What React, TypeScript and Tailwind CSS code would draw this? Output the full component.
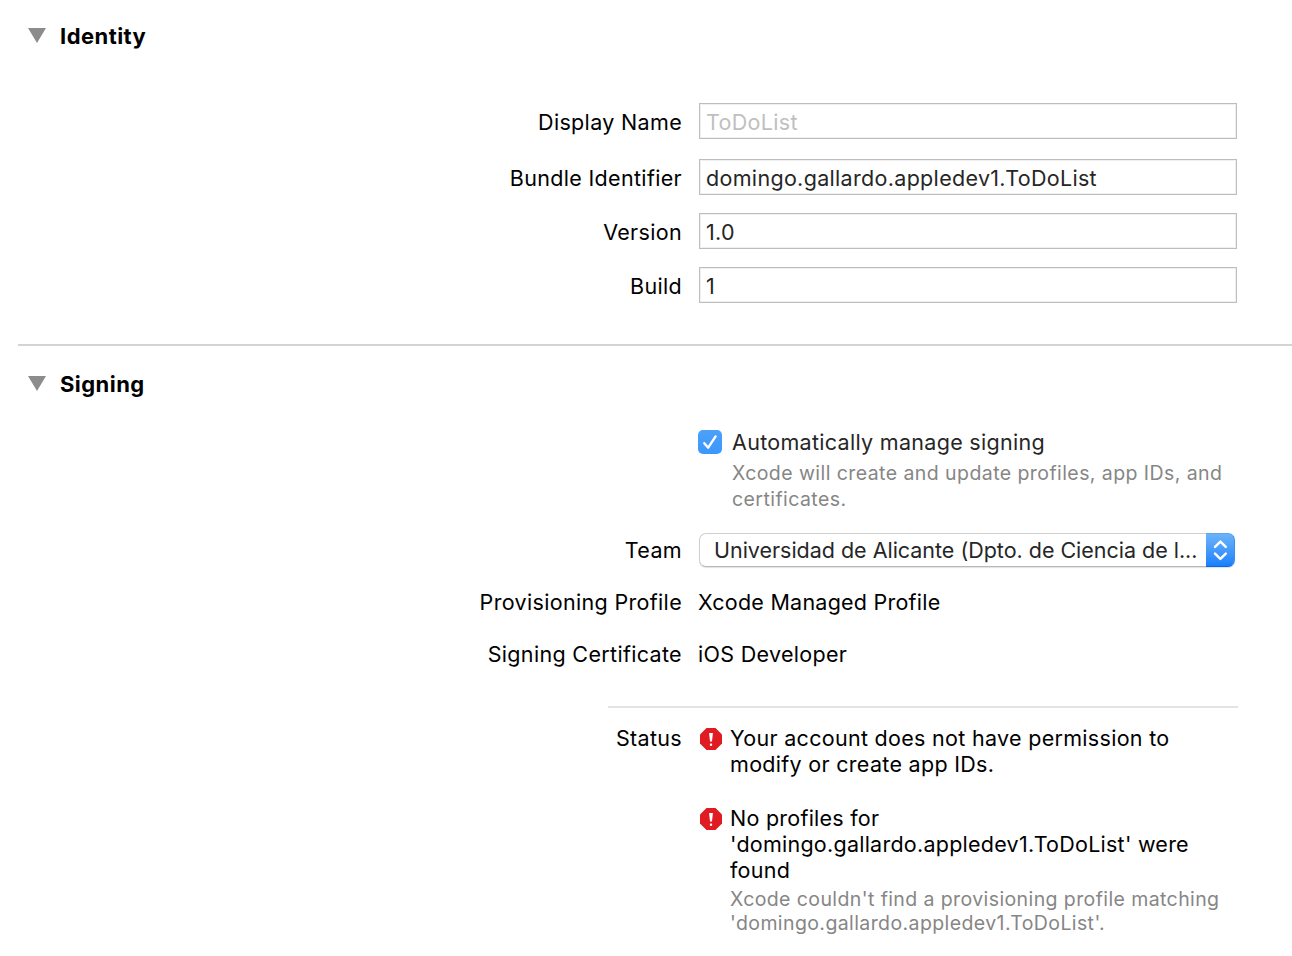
import type { ReactNode } from "react";

function SectionHeader({ title }: { title: string }) {
  return (
    <header className="flex h-8 items-start pl-7">
      <svg className="mt-2 h-[15px] w-[18px]" viewBox="0 0 18 15" aria-hidden="true">
        <path d="M0 0h18L9 15z" fill="#8c8c8c" />
      </svg>
      <h2 className="ml-3.5 mt-[3px] text-[22px] leading-[26px] font-bold tracking-[0.45px] text-black">
        {title}
      </h2>
    </header>
  );
}

function Row({ label, children }: { label: string; children: ReactNode }) {
  return (
    <div className="flex">
      <div className="mt-1.5 w-[682px] shrink-0 text-right tracking-[0.33px] text-black">{label}</div>
      {children}
    </div>
  );
}

function Field({ value = "", placeholder }: { value?: string; placeholder?: string }) {
  return (
    <input
      className="ml-[17px] h-9 w-[538px] border border-[#bdbdbd] bg-white pt-[3px] pb-px pl-[6px] tracking-[0.32px] text-[#262626] shadow-[inset_0_0_0_1px_#f0f0f0] outline-none placeholder:text-[#bfbfbf] placeholder:opacity-100"
      defaultValue={value}
      placeholder={placeholder}
    />
  );
}

function ErrorIcon() {
  return (
    <svg className="mt-[3px] size-[22px] shrink-0" viewBox="0 0 22 22" aria-hidden="true">
      <path d="M6.5 0h9L22 6.5v9L15.5 22h-9L0 15.5v-9z" fill="#e01b22" />
      <path d="M9.1 5h3.8l-.9 8.4h-2z" fill="#fff" />
      <rect x="9.9" y="15.6" width="2.2" height="2.2" fill="#fff" />
    </svg>
  );
}

export default function App() {
  return (
    <main className="h-[956px] w-[1292px] overflow-hidden bg-white pt-5 font-['Inter',sans-serif] text-[21.5px] leading-[26px] tracking-[0.3px] text-black">
      <section>
        <SectionHeader title="Identity" />
        <div className="mt-[51px] flex flex-col gap-[18px]">
          <div className="mb-0.5">
            <Row label="Display Name">
              <Field placeholder="ToDoList" />
            </Row>
          </div>
          <Row label="Bundle Identifier">
            <Field value="domingo.gallardo.appledev1.ToDoList" />
          </Row>
          <Row label="Version">
            <Field value="1.0" />
          </Row>
          <Row label="Build">
            <Field value="1" />
          </Row>
        </div>
      </section>

      <hr className="mt-[41px] ml-[18px] h-0.5 border-0 bg-[#d4d4d4]" />

      <section className="pt-[22px]">
        <SectionHeader title="Signing" />

        <div className="mt-[29px] ml-[698px] flex">
          <span
            role="checkbox"
            aria-checked="true"
            className="mt-px size-6 rounded-[5px] bg-linear-to-b from-[#4ba1f9] to-[#3b97fc]"
          >
            <svg className="size-6" viewBox="0 0 24 24" fill="none" aria-hidden="true">
              <path d="M6.3 13.2l3.9 4.5L17.6 6.4" stroke="#fff" strokeWidth="2.4" strokeLinecap="round" strokeLinejoin="round" />
            </svg>
          </span>
          <div className="ml-2.5">
            <div className="text-[#262626]">Automatically manage signing</div>
            <p className="mt-[5px] w-[510px] text-[19.5px] tracking-[0.43px] text-[#868686]">
              Xcode will create and update profiles, app IDs, and
              <br />
              certificates.
            </p>
          </div>
        </div>

        <div className="mt-[19px]">
          <Row label="Team">
            <div className="mt-[2px] ml-[17px] flex h-[34px] w-[536px] rounded-[7px] shadow-[0_1px_1px_rgba(0,0,0,0.12)]">
              <div className="w-[507px] rounded-l-[7px] border border-r-0 border-[#cfcfcf] border-b-[#b8b8b8] bg-white pt-[3px] pl-[14px] tracking-[-0.02px] whitespace-nowrap text-[#262626]">
                Universidad de Alicante (Dpto. de Ciencia de l...
              </div>
              <div className="w-[29px] rounded-r-[7px] border border-l-0 border-t-[#5aa4f0] border-r-[#3c8ff0] border-b-[#0a66f0] bg-linear-to-b from-[#6bb2f9] to-[#1880fd]">
                <svg className="h-8 w-[28px]" viewBox="0 0 28 32" fill="none" aria-hidden="true">
                  <path d="M9 12.9l5.4-5.3 5.4 5.3M9 19.6l5.4 5.3 5.4-5.3" stroke="#fff" strokeWidth="2.4" strokeLinecap="round" strokeLinejoin="round" />
                </svg>
              </div>
            </div>
          </Row>
          <div className="mt-4">
            <Row label="Provisioning Profile">
              <div className="mt-1.5 ml-4 tracking-[0.24px]">Xcode Managed Profile</div>
            </Row>
          </div>
          <div className="mt-5">
            <Row label="Signing Certificate">
              <div className="mt-1.5 ml-4">iOS Developer</div>
            </Row>
          </div>
        </div>

        <hr className="mt-[39px] ml-[608px] h-0.5 w-[630px] border-0 bg-[#e3e3e3]" />

        <div className="mt-[11px]">
          <Row label="Status">
            <div className="mt-1.5 ml-[18px] flex flex-col gap-7">
              <div className="flex gap-2">
                <ErrorIcon />
                <p>
                  Your account does not have permission to
                  <br />
                  modify or create app IDs.
                </p>
              </div>
              <div className="flex gap-2">
                <ErrorIcon />
                <div>
                  <p className="tracking-[0.25px]">
                    No profiles for
                    <br />
                    'domingo.gallardo.appledev1.ToDoList' were
                    <br />
                    found
                  </p>
                  <p className="mt-1 text-[19.5px] leading-6 tracking-[0.4px] text-[#868686]">
                    Xcode couldn't find a provisioning profile matching
                    <br />
                    'domingo.gallardo.appledev1.ToDoList'.
                  </p>
                </div>
              </div>
            </div>
          </Row>
        </div>
      </section>
    </main>
  );
}
